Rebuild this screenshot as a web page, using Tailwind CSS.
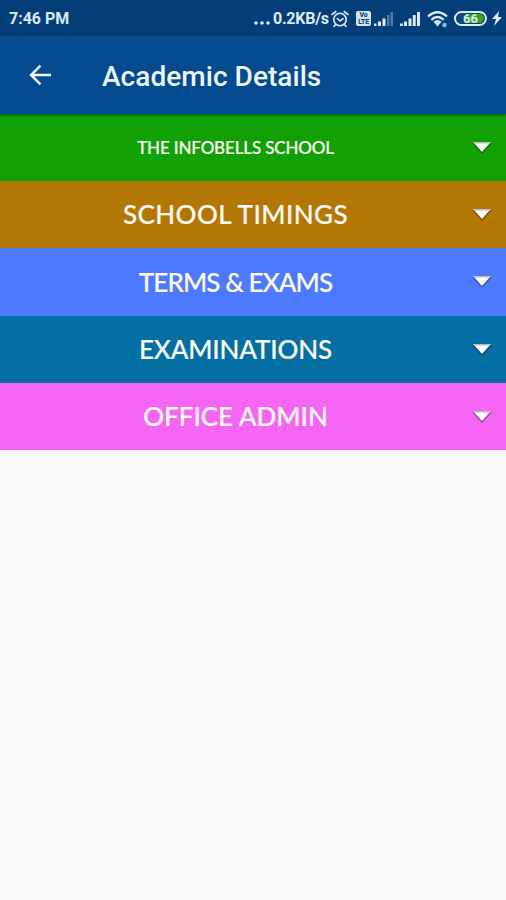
<!DOCTYPE html>
<html lang="en">
<head>
<meta charset="utf-8">
<title>Academic Details</title>
<script src="https://cdn.jsdelivr.net/npm/@tailwindcss/browser@4"></script>
</head>
<body class="bg-[#fafafa] w-[506px] h-[900px] overflow-hidden font-['Roboto',sans-serif]">
<div class="h-9 bg-[#043e78] flex items-center text-[#dcecf9] pl-[9px] pr-[4px] pt-[1px]">
  <span class="text-[16px] font-bold">7:46 PM</span>
  <div class="ml-auto flex items-center">
    <svg class="w-[18px] h-5 mr-px" viewBox="0 0 18 20" fill="currentColor"><circle cx="2" cy="14" r="1.8"/><circle cx="8" cy="14" r="1.8"/><circle cx="14" cy="14" r="1.8"/></svg>
    <span class="text-[16px] font-bold w-[55px] whitespace-nowrap tracking-[-0.25px]">0.2KB/s</span>
    <svg class="w-[18px] h-[18px] ml-[3px]" viewBox="0 0 18 18" fill="none" stroke="currentColor" stroke-width="1.6" stroke-linecap="round"><circle cx="9" cy="9.5" r="6.2"/><path d="M1 4.5 4.8 1.500M17 4.500 13.200 1.500M4.500 14.500 3 16.500M13.500 14.500 15 16.500M6.300 8.500 9 11 12 8.700"/></svg>
    <div class="ml-[7px] w-[15px] h-[15px] rounded-[2px] bg-[#d5e5f3] text-[#174b80] text-[7px] font-black leading-[7px] text-center pt-px tracking-[-0.3px]">Vo<br>LTE</div>
    <svg class="w-[20px] h-[16px] ml-[3px]" viewBox="0 0 20 16" fill="currentColor"><path d="M0 12.500h2.500V15H0zM4 10.500h3V15H4zM8.500 7.500h3V15h-3z"/><path d="M13 4h2.500v11H13zM16.500 1H19v14h-2.500z" opacity=".35"/></svg>
    <svg class="w-[20px] h-[16px] ml-[6px]" viewBox="0 0 20 16" fill="currentColor"><path d="M0 12.500h2.800V15H0zM4 10.500h3V15H4zM8.500 7.500h3V15h-3zM12.800 4h2.900v11h-2.900zM17 1h3v14h-3z"/></svg>
    <svg class="w-[22px] h-[18px] ml-[7px]" viewBox="0 0 22 18" fill="none" stroke="currentColor" stroke-width="2.300"><path d="M1 6.500Q10.500-2 20 6.500M4.300 9.800Q10.500 4.300 16.700 9.800M7.200 12.600Q10.500 10 13.800 12.600"/><path d="M8 13.500 10.500 16.500 13 13.500Q10.500 11.500 8 13.500Z" fill="currentColor" stroke="none"/><circle cx="17.500" cy="15" r="2.200" fill="#8dbcf0" stroke="none"/></svg>
    <div class="ml-[5px] w-[33px] h-[15px] rounded-full border-2 border-[#dcecf9] p-px">
      <div class="h-full rounded-full bg-linear-to-r from-[#12497b] from-35% to-[#3ba414] to-35% flex items-center justify-center text-[13px] font-bold leading-none">66</div>
    </div>
    <svg class="w-[10px] h-[15px] ml-[5px]" viewBox="0 0 10 15" fill="currentColor"><path d="M7 0 0 8h4L2 15l8-9H6z"/></svg>
  </div>
</div>
<header class="relative h-[78px] bg-[#034a8f] flex items-center shadow-[0_1px_3px_rgba(0,0,0,0.5)] text-[#f0f5fb]">
  <svg class="w-[22px] h-[22px] ml-[29px]" viewBox="0 0 24 24" fill="none" stroke="currentColor" stroke-width="2.800"><path d="M24 12H2.500M12.500 1.800 2.300 12 12.500 22.200"/></svg>
  <h1 class="ml-[51px] mt-[3px] text-[28px] tracking-[0.05px] font-medium leading-8 whitespace-nowrap">Academic Details</h1>
</header>
<main class="font-['Lato',sans-serif] text-[#fbf9f5] font-medium whitespace-nowrap">
  <div class="h-[67px] bg-[#12a104] flex items-center">
    <div class="w-[471px] text-center text-[17px]"><span class="tracking-[-0.15px] [-webkit-text-stroke:0.2px_currentColor]">THE INFOBELLS SCHOOL</span></div>
    <svg class="w-[22px] h-[18px]" viewBox="0 0 22 18"><path d="M1 4h20L11 15z" fill="#000" opacity=".35"/><path d="M2 3h18L11 13z" fill="#fff"/><path d="M2 3h18l-1 1.500H3z" fill="#bbb"/></svg>
  </div>
  <div class="h-[67px] bg-[#b57703] flex items-center">
    <div class="w-[471px] text-center text-[26px]"><span class="tracking-[0.45px] [-webkit-text-stroke:0.2px_currentColor]">SCHOOL TIMINGS</span></div>
    <svg class="w-[22px] h-[18px]" viewBox="0 0 22 18"><path d="M1 4h20L11 15z" fill="#000" opacity=".35"/><path d="M2 3h18L11 13z" fill="#fff"/><path d="M2 3h18l-1 1.500H3z" fill="#bbb"/></svg>
  </div>
  <div class="h-[68px] bg-[#4d79ff] flex items-center">
    <div class="w-[471px] text-center text-[26px]"><span class="tracking-[-0.9px] [-webkit-text-stroke:0.2px_currentColor]">TERMS &amp; EXAMS</span></div>
    <svg class="w-[22px] h-[18px]" viewBox="0 0 22 18"><path d="M1 4h20L11 15z" fill="#000" opacity=".35"/><path d="M2 3h18L11 13z" fill="#fff"/><path d="M2 3h18l-1 1.500H3z" fill="#bbb"/></svg>
  </div>
  <div class="h-[67px] bg-[#046fa2] flex items-center">
    <div class="w-[471px] text-center text-[26px]"><span class="tracking-[-0.15px] [-webkit-text-stroke:0.2px_currentColor]">EXAMINATIONS</span></div>
    <svg class="w-[22px] h-[18px]" viewBox="0 0 22 18"><path d="M1 4h20L11 15z" fill="#000" opacity=".35"/><path d="M2 3h18L11 13z" fill="#fff"/><path d="M2 3h18l-1 1.500H3z" fill="#bbb"/></svg>
  </div>
  <div class="h-[67px] bg-[#f566f5] flex items-center">
    <div class="w-[471px] text-center text-[26px]"><span class="[-webkit-text-stroke:0.2px_currentColor]">OFFICE ADMIN</span></div>
    <svg class="w-[22px] h-[18px]" viewBox="0 0 22 18"><path d="M1 4h20L11 15z" fill="#000" opacity=".35"/><path d="M2 3h18L11 13z" fill="#fff"/><path d="M2 3h18l-1 1.500H3z" fill="#bbb"/></svg>
  </div>
</main>
</body>
</html>
